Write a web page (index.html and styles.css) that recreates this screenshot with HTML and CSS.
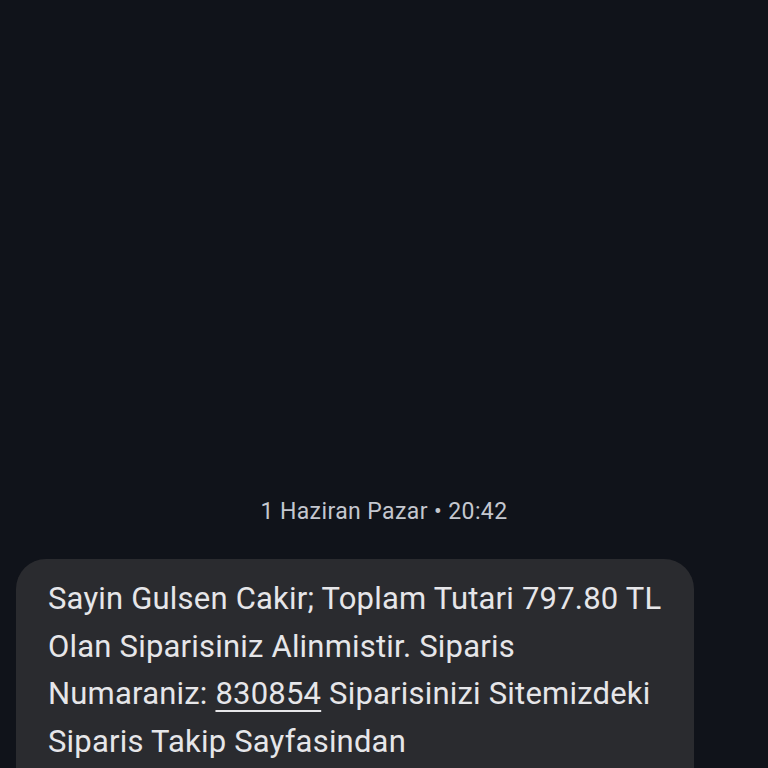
FILE: index.html
```html
<!DOCTYPE html>
<html lang="tr">
<head>
<meta charset="utf-8">
<link rel="stylesheet" href="styles.css">
</head>
<body>
<main class="thread">
  <div class="stamp">1 Haziran Pazar • 20:42</div>
  <div class="bubble">
    <p class="msg">Sayin Gulsen Cakir; Toplam Tutari 797.80 TL<br>Olan Siparisiniz Alinmistir. Siparis<br>Numaraniz: <span class="link">830854</span> Siparisinizi Sitemizdeki<br>Siparis Takip Sayfasindan</p>
  </div>
</main>
</body>
</html>
```
FILE: styles.css
```css
html, body {
  margin: 0;
  padding: 0;
  background: #10131a;
  height: 768px;
  overflow: hidden;
}
.thread {
  display: flex;
  flex-direction: column;
  align-items: flex-start;
  padding: 497px 0 0 16px;
  font-family: Roboto, "Noto Sans", sans-serif;
}
.stamp {
  align-self: stretch;
  margin-right: 16px;
  text-align: center;
  color: #c4c7cf;
  font-size: 23px;
  letter-spacing: 0.4px;
  line-height: 30px;
}
.bubble {
  margin-top: 32px;
  width: 678px;
  box-sizing: border-box;
  background: #2a2b2f;
  border-radius: 30px;
  padding: 16px 32px 20px;
  height: 240px;
}
.msg {
  margin: 0;
  color: #e6e6e9;
  font-size: 31px;
  letter-spacing: 0.2px;
  line-height: 47.5px;
}
.link {
  text-decoration: underline;
  text-underline-offset: 6px;
  text-decoration-thickness: 2px;
}
```
